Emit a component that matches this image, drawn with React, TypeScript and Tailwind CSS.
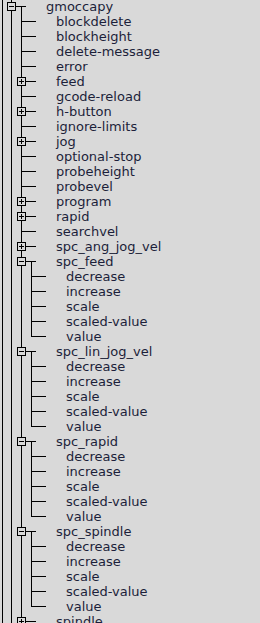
import React from "react";

type Row = { label: string; level: 1 | 2 | 3; expander?: "+" | "-"; last?: boolean };

const leaves = ["decrease", "increase", "scale", "scaled-value", "value"];

function kids(): Row[] {
    return leaves.map((l, i) => ({ label: l, level: 3, last: i === leaves.length - 1 }));
}

const rows: Row[] = [
    { label: "gmoccapy", level: 1, expander: "-" },
    { label: "blockdelete", level: 2 },
    { label: "blockheight", level: 2 },
    { label: "delete-message", level: 2 },
    { label: "error", level: 2 },
    { label: "feed", level: 2, expander: "+" },
    { label: "gcode-reload", level: 2 },
    { label: "h-button", level: 2, expander: "+" },
    { label: "ignore-limits", level: 2 },
    { label: "jog", level: 2, expander: "+" },
    { label: "optional-stop", level: 2 },
    { label: "probeheight", level: 2 },
    { label: "probevel", level: 2 },
    { label: "program", level: 2, expander: "+" },
    { label: "rapid", level: 2, expander: "+" },
    { label: "searchvel", level: 2 },
    { label: "spc_ang_jog_vel", level: 2, expander: "+" },
    { label: "spc_feed", level: 2, expander: "-" },
    ...kids(),
    { label: "spc_lin_jog_vel", level: 2, expander: "-" },
    ...kids(),
    { label: "spc_rapid", level: 2, expander: "-" },
    ...kids(),
    { label: "spc_spindle", level: 2, expander: "-" },
    ...kids(),
    { label: "spindle", level: 2, expander: "+" },
];

const X = [2, 11, 21, 31];
const BG = "#d9d9d9";
const INK = "#000";

function VLine({ x, y1, y2 }: { x: number; y1: number; y2: number }) {
    return <line x1={x + 0.5} x2={x + 0.5} y1={y1} y2={y2} stroke={INK} strokeWidth={1} />;
}

function Expander({ c, sign }: { c: number; sign: "+" | "-" }) {
    return (
        <g>
            <rect x={c - 3.5} y={3.5} width={8} height={8} fill={BG} stroke={INK} strokeWidth={1} />
            <line x1={c - 2} x2={c + 3} y1={7.5} y2={7.5} stroke={INK} strokeWidth={1} />
            {sign === "+" && <line x1={c + 0.5} x2={c + 0.5} y1={5} y2={10} stroke={INK} strokeWidth={1} />}
        </g>
    );
}

function Guides({ row, nextIsChild }: { row: Row; nextIsChild: boolean }) {
    const c = X[row.level];
    const w = c + 35;
    return (
        <svg width={w} height={15} className="shrink-0" shapeRendering="crispEdges">
            <VLine x={X[0]} y1={0} y2={15} />
            <VLine x={X[1]} y1={0} y2={15} />
            {row.level === 1 && <VLine x={X[2]} y1={7} y2={15} />}
            {row.level >= 2 && <VLine x={X[2]} y1={0} y2={15} />}
            {row.level === 2 && nextIsChild && <VLine x={X[3]} y1={7} y2={15} />}
            {row.level === 3 && <VLine x={X[3]} y1={0} y2={row.last ? 8 : 15} />}
            <line x1={c} x2={c + 15} y1={7.5} y2={7.5} stroke={INK} strokeWidth={1} />
            {row.expander && <Expander c={c} sign={row.expander} />}
        </svg>
    );
}

export default function App() {
    return (
        <div className="w-[260px] h-[623px] overflow-hidden bg-[#d9d9d9] font-['DejaVu_Sans',sans-serif] text-[13px] leading-[15px] text-[#1c1f3a]">
            <div className="-mt-px flex flex-col">
                {rows.map((r, i) => (
                    <div key={i} className="flex h-[15px] items-start whitespace-nowrap">
                        <Guides row={r} nextIsChild={rows[i + 1]?.level === 3} />
                        <span>{r.label}</span>
                    </div>
                ))}
            </div>
        </div>
    );
}
